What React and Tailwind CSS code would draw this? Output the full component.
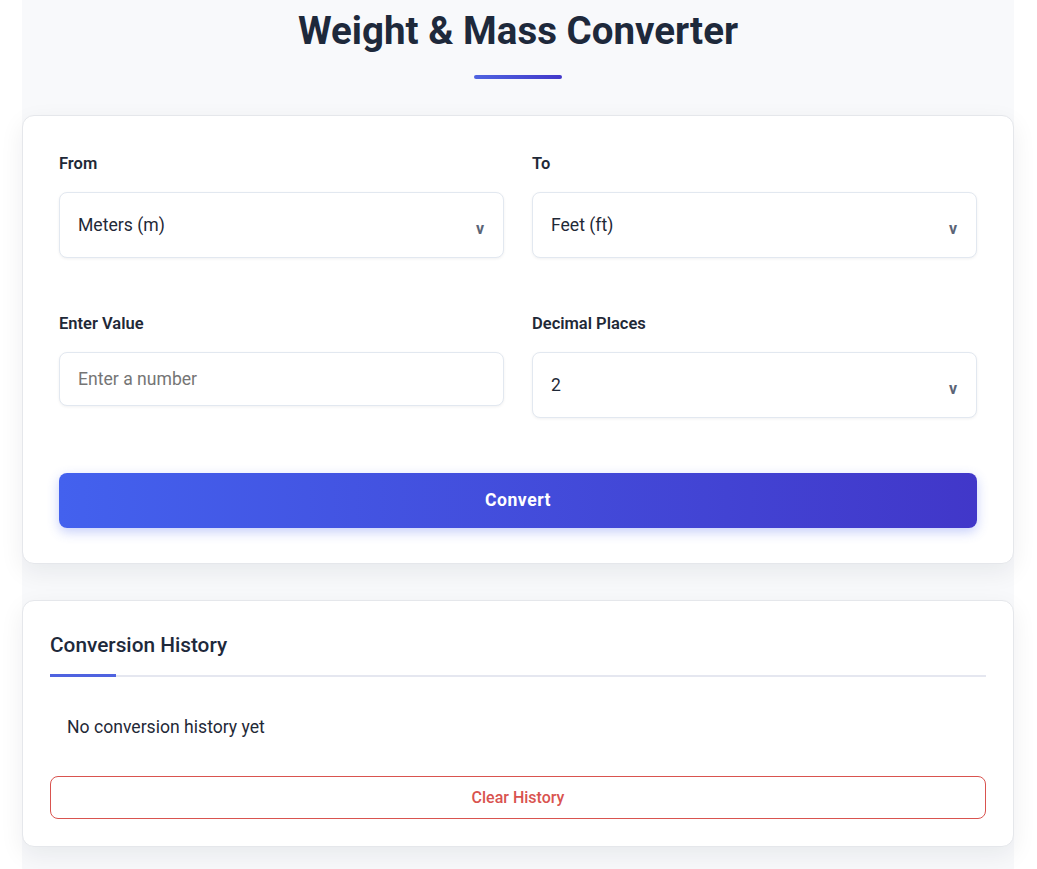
// Weight & Mass converter screen
import { useState } from "react";

const Field = ({ label, children }) => (
  <div className="flex flex-col">
    <label className="text-[16.5px] font-semibold text-[#1f2937] leading-[22px] mb-[17px]">
      {label}
    </label>
    {children}
  </div>
);

const SelectBox = ({ value }) => (
  <div className="h-[66px] rounded-lg border border-[#e2e8f0] bg-white shadow-[0_1px_3px_rgba(15,23,42,0.06)] flex items-center justify-between pl-[18px] pr-[19px]">
    <span className="text-[17.6px] text-[#1f2937]">{value}</span>
    <span className="text-[16px] font-bold text-[#5b6577] mt-[8px]">v</span>
  </div>
);

export default function App() {
  // INPUT VALUE STATE
  const [value, setValue] = useState("");
  return (
    <div className="min-h-[869px] bg-white font-['Roboto',sans-serif]">
      <div className="w-[992px] ml-[22px] bg-[#f8f9fb] min-h-[869px]">
        {/* HEADER */}
        <header className="flex flex-col items-center pt-[6px]">
          <h1 className="text-[38.5px] leading-[50px] font-bold text-[#1e293b]">
            Weight &amp; Mass Converter
          </h1>
          <div className="w-[88px] h-[4px] mt-[19px] rounded-full bg-gradient-to-r from-[#4f63e0] to-[#4338ca]" />
        </header>
        {/* CONVERTER CARD */}
        <section className="mt-[36px] bg-white border border-[#e5e7eb] rounded-xl shadow-[0_8px_24px_rgba(15,23,42,0.07)] px-[36px] pt-[37px] pb-[35px]">
          <div className="grid grid-cols-2 gap-x-[28px]">
            <Field label="From">
              <SelectBox value="Meters (m)" />
            </Field>
            <Field label="To">
              <SelectBox value="Feet (ft)" />
            </Field>
          </div>
          <div className="grid grid-cols-2 gap-x-[28px] mt-[55px] items-start">
            <Field label="Enter Value">
              <input
                value={value}
                onChange={(e) => setValue(e.target.value)}
                placeholder="Enter a number"
                className="h-[54px] rounded-lg border border-[#e2e8f0] bg-white shadow-[0_1px_3px_rgba(15,23,42,0.06)] px-[18px] text-[17.6px] text-[#1f2937] placeholder:text-[#757575] outline-none"
              />
            </Field>
            <Field label="Decimal Places">
              <SelectBox value="2" />
            </Field>
          </div>
          <button className="mt-[55px] w-full h-[55px] rounded-lg bg-gradient-to-r from-[#4361ee] to-[#4137c9] text-white text-[17.6px] font-bold tracking-[0.5px] shadow-[0_4px_12px_rgba(67,97,238,0.3)]">
            Convert
          </button>
        </section>
        {/* HISTORY CARD */}
        <section className="mt-[36px] bg-white border border-[#e5e7eb] rounded-xl shadow-[0_8px_24px_rgba(15,23,42,0.07)] px-[27px] pt-[28px] pb-[27px]">
          <h2 className="text-[20.8px] leading-[32px] font-medium text-[#1e293b]">
            Conversion History
          </h2>
          <div className="relative mt-[14px] h-[2px] bg-[#e5e7f0]">
            <div className="absolute left-0 top-[-1px] h-[3px] w-[66px] bg-[#4f63e0]" />
          </div>
          <p className="mt-[39px] pl-[17px] text-[17.6px] leading-[22px] text-[#1f2937]">
            No conversion history yet
          </p>
          <button className="mt-[38px] w-full h-[43px] rounded-lg border border-[#d9534f] text-[#d9534f] text-[16px] font-medium bg-white">
            Clear History
          </button>
        </section>
      </div>
    </div>
  );
}
